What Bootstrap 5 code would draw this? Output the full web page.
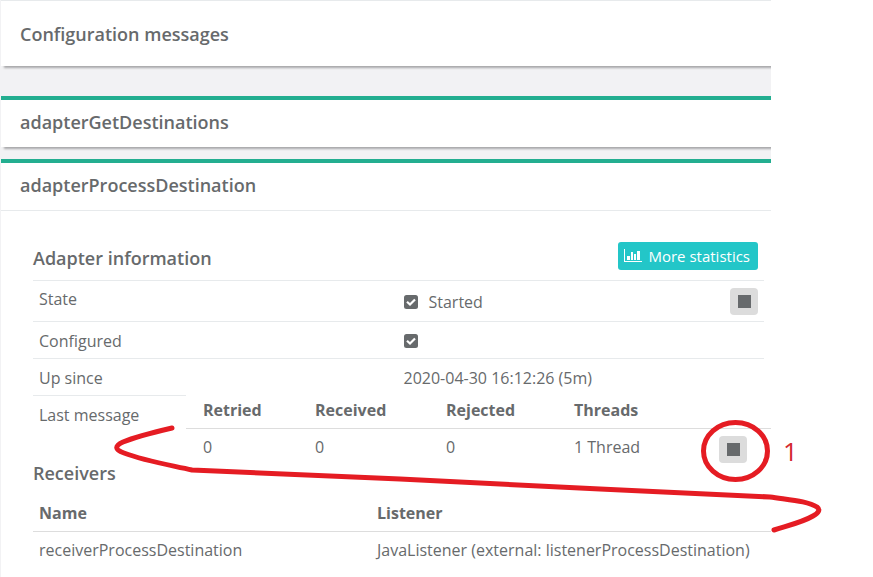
<!DOCTYPE html>
<html lang="en">
<head>
<meta charset="utf-8">
<meta name="viewport" content="width=device-width, initial-scale=1">
<title>Adapter status</title>
<link href="https://cdn.jsdelivr.net/npm/bootstrap@5.3.0/dist/css/bootstrap.min.css" rel="stylesheet">
<style>
body { font-family: "Open Sans", "Noto Sans", sans-serif; font-size: 16px; line-height: 20px; color: #676a6c; background: #fff; overflow: hidden; }
.status-page { margin-right: 102px; padding-left: 1px; background: #f2f2f4; overflow: hidden; }
.panel-box { background: #fff; box-shadow: 3px 2px 2px 0 #a8a8aa; }
.panel-plain { border-top: 1px solid #e7eaec; margin-bottom: 30px; }
.panel-ok { border-top: 4px solid #23ae90; margin-bottom: 12px; }
h2, h3 { font-size: 18px; line-height: 20px; font-weight: 600; margin: 0; }
.panel-plain h2 { padding: 23px 19px 22px; }
.panel-ok h2 { padding: 12px 19px 15px; }
.panel-body-area { border-top: 1px solid #e7eaec; padding: 31px 0 16px 32px; }
.info-area { padding-right: 7px; }
.info-title { padding: 6px 0 12px; }
.table { --bs-table-bg: transparent; --bs-table-color: #676a6c; color: #676a6c; border-color: #e7eaec; }
.table > :not(caption) > * > * { padding: 8px 6px; border-bottom-width: 0; border-top: 1px solid #e7eaec; font-weight: 400; }
.table > thead > tr > th { font-weight: 700; border-top: 0; border-bottom: 1px solid #ddd; }
.table > tbody.plain-rows > tr > * { border-top: 0; }
.info-table { table-layout: fixed; }
.info-table > tbody > tr > * { padding: 9px 6px 7px; }
.info-table > tbody > .state-row > th { padding-top: 8px; }
.info-table > tbody > .state-row > td { padding: 7px 6px 6px; }
.info-table > tbody > tr > td:nth-child(2) { padding-left: 5px; }
.info-table > tbody > .configured-row > td { padding: 7px 6px 9px; }
.started-text { margin-left: 11px; }
.label-col { width: 50%; }
.action-col { width: 60px; }
.stats-btn { background: #23c6c8; color: #fff; font-size: 15px; line-height: 20px; padding: 4px 8px 4px 6px; border-radius: 3px; border: 0; margin-right: 6px; }
.stats-btn:hover { background: #21b9bb; color: #fff; }
.stats-btn svg { margin-right: 6px; }
.stop-btn { background: #dcdcdc; border: 0; border-radius: 4px; width: 28px; height: 27px; padding: 0; }
.stop-btn svg { display: block; margin: auto; }
.last-label { width: 153px; border-top: 1px solid #e7eaec; padding: 9px 6px 10px; }
.receivers-title { margin-top: 28px; }
.message-table > :not(caption) > tr > * { padding: 8px 17px; }
.message-table > thead > tr > th { padding: 5px 17px 8px; }
.message-table > tbody > tr > td:last-child { padding: 7px 24px 9px 0; }
.w-retried { width: 112px; } .w-received { width: 131px; } .w-rejected { width: 128px; } .w-threads { width: 130px; }
.receiver-table { table-layout: fixed; margin-top: 12px; }
.receiver-name { width: 338px; }
.annotation { left: 0; top: 0; pointer-events: none; }
</style>
<script src="https://cdn.jsdelivr.net/npm/bootstrap@5.3.0/dist/js/bootstrap.bundle.min.js"></script>
</head>
<body class="position-relative">
<main class="status-page">
  <section class="panel-box panel-plain"><h2>Configuration messages</h2></section>
  <section class="panel-box panel-ok"><h2>adapterGetDestinations</h2></section>
  <section class="panel-box panel-ok mb-0">
    <h2>adapterProcessDestination</h2>
    <div class="panel-body-area">
      <div class="info-area">
        <div class="d-flex justify-content-between align-items-start">
          <h3 class="info-title">Adapter information</h3>
          <button type="button" class="btn stats-btn d-flex align-items-center">
            <svg width="18" height="14" viewBox="0 0 18 14" fill="#fff" class="flex-shrink-0" aria-hidden="true"><path d="M0 0h1v12h17v1H0zM3 7h3v4H3zM7 3h2v8H7zM10 5h2v6h-2zM13 2h3v9h-3z"/></svg>
            <span>More statistics</span>
          </button>
        </div>
        <table class="table info-table mb-0">
          <colgroup><col class="label-col"><col><col class="action-col"></colgroup>
          <tbody>
            <tr class="state-row">
              <th scope="row">State</th>
              <td class="align-middle"><span class="d-flex align-items-center"><svg width="14" height="14" viewBox="0 0 14 14" aria-hidden="true"><rect width="14" height="14" rx="2.5" fill="#676a6c"/><path d="M3 6.700 6 9.500 11 4.500" fill="none" stroke="#fff" stroke-width="2.200"/></svg><span class="started-text">Started</span></span></td>
              <td class="text-end"><button type="button" class="stop-btn align-top" aria-label="Stop adapter"><svg width="13" height="13" viewBox="0 0 13 13"><path fill="#676a6c" d="M0 0h13v13H0z"/></svg></button></td>
            </tr>
            <tr class="configured-row">
              <th scope="row">Configured</th>
              <td colspan="2"><svg class="align-middle" width="14" height="14" viewBox="0 0 14 14" role="img" aria-label="Yes"><rect width="14" height="14" rx="2.5" fill="#676a6c"/><path d="M3 6.700 6 9.500 11 4.500" fill="none" stroke="#fff" stroke-width="2.200"/></svg></td>
            </tr>
            <tr><th scope="row">Up since</th><td colspan="2">2020-04-30 16:12:26 (5m)</td></tr>
          </tbody>
        </table>
      </div>
      <div class="d-flex">
        <div class="flex-shrink-0">
          <div class="last-label">Last message</div>
          <h3 class="receivers-title">Receivers</h3>
        </div>
        <div class="flex-grow-1">
          <table class="table message-table mb-0">
            <colgroup><col class="w-retried"><col class="w-received"><col class="w-rejected"><col class="w-threads"><col></colgroup>
            <thead><tr><th scope="col">Retried</th><th scope="col">Received</th><th scope="col">Rejected</th><th scope="col">Threads</th><th></th></tr></thead>
            <tbody class="plain-rows"><tr><td>0</td><td>0</td><td>0</td><td>1 Thread</td><td class="text-end"><button type="button" class="stop-btn align-top" aria-label="Stop receiver"><svg width="13" height="13" viewBox="0 0 13 13"><path fill="#676a6c" d="M0 0h13v13H0z"/></svg></button></td></tr></tbody>
          </table>
        </div>
      </div>
      <table class="table receiver-table">
        <colgroup><col class="receiver-name"><col></colgroup>
        <thead><tr><th scope="col">Name</th><th scope="col">Listener</th></tr></thead>
        <tbody class="plain-rows"><tr><td>receiverProcessDestination</td><td class="text-nowrap">JavaListener (external: listenerProcessDestination)</td></tr></tbody>
      </table>
    </div>
  </section>
</main>
<svg class="annotation position-absolute" width="873" height="577" viewBox="0 0 873 577" aria-label="Marked button 1">
  <g fill="none" stroke="#e51c23" stroke-width="5" stroke-linecap="round" stroke-linejoin="round">
    <path d="M172 428C155 432 135 437 123 442Q110 448 124 453C145 461 170 465 192 470L400 479 600 489 770 497C790 500 808 501 817 507Q822 511 813 516C803 522 790 525 774 530"/>
    <ellipse cx="735.500" cy="451" rx="32" ry="28.500"/>
  </g>
  <text x="783" y="461" fill="#d42a30" font-family="Open Sans, sans-serif" font-size="26">1</text>
</svg>
</body>
</html>
